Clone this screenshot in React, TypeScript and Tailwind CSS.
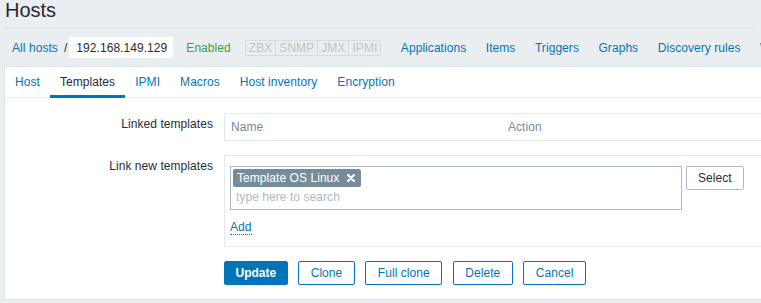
const navLinks = ["Applications", "Items", "Triggers", "Graphs", "Discovery rules", "Web"];
const tabs = ["Host", "Templates", "IPMI", "Macros", "Host inventory", "Encryption"];
const badges = ["ZBX", "SNMP", "JMX", "IPMI"];

function RemoveIcon() {
  return (
    <svg width="8" height="8" viewBox="0 0 8 8" className="ml-[8px]">
      <path d="M1 1 L7 7 M7 1 L1 7" stroke="#ffffff" strokeWidth="2.2" strokeLinecap="round" />
    </svg>
  );
}

export default function App() {
  return (
    <div className="w-[761px] h-[303px] overflow-hidden bg-[#ebeef0] font-['Liberation_Sans',Arial,sans-serif] text-[12px] leading-[14px] tracking-[0.06px] text-[#1f2c33]">
      {/* Page title */}
      <div className="mx-[4px] h-[29px] border-b border-[#dfe4e7]">
        <h1 className="text-[20px] leading-[20px] tracking-normal pl-[1px]">Hosts</h1>
      </div>

      {/* Host navigation */}
      <div className="flex items-center h-[37px] whitespace-nowrap">
        <span className="ml-[12px] text-[#0275b8]">All hosts</span>
        <span className="ml-[6px]">/</span>
        <span className="ml-[2px] bg-white pl-[7px] pr-[6px] py-[4px] h-[21px]">192.168.149.129</span>
        <span className="ml-[13px] text-[#429e47]">Enabled</span>
        <span className="ml-[14px] flex border border-[#d5dadd] h-[16px] items-center">
          {badges.map((b, i) => (
            <span
              key={b}
              className={
                "px-[3px] h-full flex items-center text-[#bcc4c8] " +
                (i > 0 ? "border-l border-[#d5dadd]" : "")
              }
            >
              {b}
            </span>
          ))}
        </span>
        {navLinks.map((l) => (
          <span key={l} className="ml-[19.5px] text-[#0275b8]">
            {l}
          </span>
        ))}
      </div>

      {/* Main panel */}
      <div className="ml-[4px] w-[820px] bg-white border border-[#dfe4e7]">
        <div className="flex h-[31px] border-b border-[#ebeef0] whitespace-nowrap">
          {tabs.map((t) =>
            t === "Templates" ? (
              <span key={t} className="px-[10px] pt-[8px] h-[31px] border-b-[3px] border-[#0275b8] text-[#1f2c33]">
                {t}
              </span>
            ) : (
              <span key={t} className="px-[10px] pt-[8px] h-[30px] text-[#0275b8]">
                {t}
              </span>
            )
          )}
        </div>

        <div className="pt-[15px] pb-[14px]">
          {/* Linked templates */}
          <div className="flex">
            <div className="w-[208px] text-right pt-[4px]">Linked templates</div>
            <div className="ml-[11px] flex-1 border border-[#e5e8ea] flex text-[#768d99]">
              <div className="w-[277px] px-[6px] py-[6px]">Name</div>
              <div className="px-[6px] py-[6px]">Action</div>
            </div>
          </div>

          {/* Link new templates */}
          <div className="flex mt-[14px]">
            <div className="w-[208px] text-right pt-[4px]">Link new templates</div>
            <div className="ml-[11px] flex-1 border border-[#e5e8ea] pt-[10px] pl-[5px] pb-[12px]">
              <div className="flex items-start">
                <div className="w-[452px] h-[44px] border border-[#acbbc2] p-[2px]">
                  <span className="inline-flex items-center h-[18px] pl-[4px] pr-[6px] bg-[#768d99] text-white rounded-[2px]">
                    Template OS Linux
                    <RemoveIcon />
                  </span>
                  <div className="pl-[3px] mt-[3px] text-[#acbbc2]">type here to search</div>
                </div>
                <button className="ml-[4px] h-[24px] px-[11px] border border-[#acbbc2] bg-white rounded-[2px] text-[#1f2c33]">
                  Select
                </button>
              </div>
              <div className="mt-[10px]">
                <span className="text-[#0275b8] border-b border-dotted border-[#0275b8]">Add</span>
              </div>
            </div>
          </div>

          {/* Actions */}
          <div className="flex mt-[14px]">
            <div className="w-[208px]" />
            <div className="ml-[11px] flex gap-[10.5px]">
              <button className="h-[24px] px-[10.5px] bg-[#0275b8] border border-[#0275b8] rounded-[2px] text-white font-bold tracking-normal">
                Update
              </button>
              {["Clone", "Full clone", "Delete", "Cancel"].map((b) => (
                <button
                  key={b}
                  className="h-[24px] px-[11.5px] bg-white border border-[#0275b8] rounded-[2px] text-[#0275b8]"
                >
                  {b}
                </button>
              ))}
            </div>
          </div>
        </div>
      </div>
    </div>
  );
}
